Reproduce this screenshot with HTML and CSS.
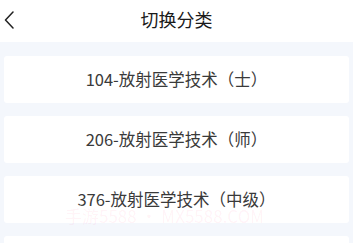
FILE: index.html
```html
<!DOCTYPE html>
<html lang="zh-CN">
<head>
  <meta charset="UTF-8" />
  <title>切换分类</title>
  <link rel="stylesheet" href="styles.css">
</head>
<body>
<div class="header">
  <span class="back">
    <svg width="10" height="18" viewBox="0 0 10 18">
      <polyline points="9,1 1.5,9 9,17" fill="none" stroke="#222" stroke-width="1.5" stroke-linecap="round" stroke-linejoin="round"/>
    </svg>
  </span>
  <h1>切换分类</h1>
</div>

<div class="list">
  <div class="item">104-放射医学技术（士）</div>
  <div class="item">206-放射医学技术（师）</div>
  <div class="item">376-放射医学技术（中级）</div>
  <div class="item item-cut"></div>
</div>

<div class="watermark">手游5588 • MX5588.COM</div>
</body>
</html>
```

FILE: styles.css
```css
html {
    overflow: hidden;
}

body {
    margin: 0;
    font-family: "Noto Sans CJK SC", "Noto Sans", sans-serif;
    background-color: #f4f7fc;
    color: #333;
    position: relative;
    height: 243px;
    overflow: hidden;
}

.header {
    background-color: #fff;
    height: 42px;
    display: flex;
    align-items: center;
    justify-content: center;
    position: relative;
}

.back {
    position: absolute;
    left: 4px;
    top: 11px;
    display: flex;
}

h1 {
    margin: 0;
    font-size: 18px;
    font-weight: 400;
    color: #1a1a1a;
    line-height: 1;
    margin-top: -4px;
}

.list {
    display: flex;
    flex-direction: column;
    gap: 13px;
    padding: 14px 4px 0;
}

.item {
    background-color: #fff;
    height: 47px;
    border-radius: 3px;
    display: flex;
    align-items: center;
    justify-content: center;
    font-size: 16.5px;
    line-height: 1;
    color: #3a3a3a;
}

.item-cut {
    height: 7px;
    border-radius: 3px 3px 0 0;
}

.watermark {
    position: absolute;
    left: 65px;
    top: 209px;
    font-size: 17px;
    line-height: 14px;
    color: rgba(255, 80, 140, 0.07);
    white-space: nowrap;
}
```
